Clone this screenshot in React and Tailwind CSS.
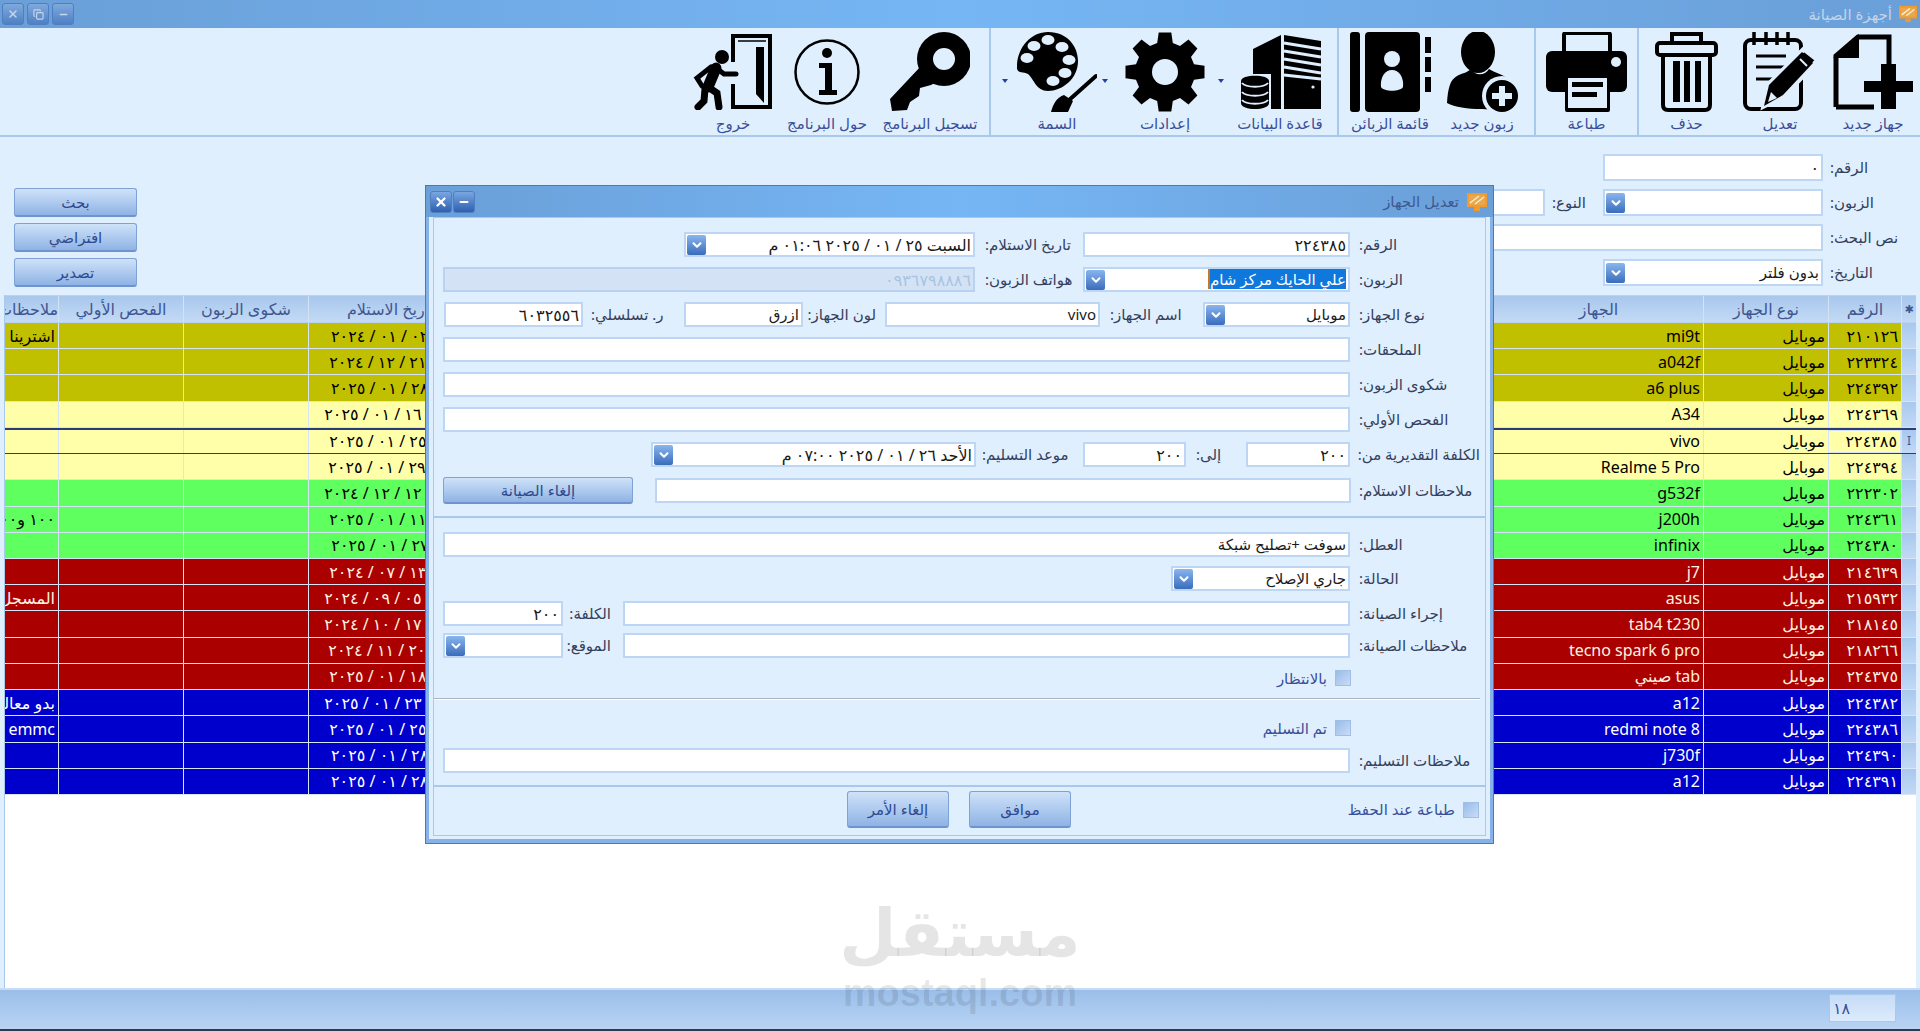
import React from 'react';
import { ChevronDown, X, Minus, Copy } from 'lucide-react';

const BG = '#e0effe';

// ---------- toolbar icons ----------
function NewDeviceIcon() {
  return (
    <svg width="81" height="76" viewBox="0 0 81 76">
      <path d="M3 73V22L25 3H56V30M3 73H41" fill="none" stroke="#000" strokeWidth="5" />
      <path d="M0 24L26 0V24Z" />
      <path d="M48 30H63V47H80V58H63V75H48V58H31V47H48Z" />
    </svg>
  );
}
function EditIcon() {
  return (
    <svg width="77" height="80" viewBox="0 0 77 80">
      <rect x="3" y="8" width="56" height="69" rx="6" fill="none" stroke="#000" strokeWidth="4" />
      <path d="M12 0V13M24 0V13M35 0V13M46 0V13" stroke="#000" strokeWidth="3.5" />
      <path d="M14 24H44M14 35H44M14 47H34" stroke="#000" strokeWidth="3" />
      <path d="M22 74L27 52L62 17L76 28L42 64Z" stroke={BG} strokeWidth="5" />
      <path d="M22 74L27 53L60 20L71 31L41 63Z" />
      <path d="M26 70L29 60L35 66Z" fill={BG} />
      <path d="M58 27L65 34" stroke={BG} strokeWidth="2" />
    </svg>
  );
}
function TrashIcon() {
  return (
    <svg width="63" height="80" viewBox="0 0 63 80">
      <path d="M17 11V2H46V11" fill="none" stroke="#000" strokeWidth="4" />
      <rect x="2" y="11" width="59" height="12" rx="3" fill="none" stroke="#000" strokeWidth="4" />
      <path d="M8 24V73Q8 78 13 78H50Q55 78 55 73V24" fill="none" stroke="#000" strokeWidth="4" />
      <rect x="18" y="29" width="7" height="41" />
      <rect x="29" y="29" width="6" height="41" />
      <rect x="40" y="29" width="6" height="41" />
    </svg>
  );
}
function PrinterIcon() {
  return (
    <svg width="81" height="80" viewBox="0 0 81 80">
      <path d="M18 19V3Q18 1 20 1H62Q64 1 64 3V19" fill="none" stroke="#000" strokeWidth="4" />
      <rect x="0" y="19" width="81" height="41" rx="6" />
      <circle cx="70" cy="30" r="5" fill={BG} />
      <rect x="19" y="43" width="45" height="37" rx="2" />
      <rect x="22" y="46" width="39" height="30" fill={BG} />
      <rect x="26" y="50" width="31" height="5" />
      <rect x="26" y="60" width="25" height="5" />
    </svg>
  );
}
function UserAddIcon() {
  return (
    <svg width="71" height="80" viewBox="0 0 71 80">
      <ellipse cx="31" cy="20" rx="17" ry="21" />
      <path d="M0 71C1 56 3 48 10 44C15 41 20 41 24 37C28 44 38 44 42 37C48 41 55 42 60 46L70 60L50 78L35 77C20 77 8 75 0 71Z" />
      <circle cx="55" cy="64" r="20" fill={BG} />
      <circle cx="55" cy="64" r="16" />
      <path d="M52 54H58V61H65V67H58V74H52V67H45V61H52Z" fill={BG} />
    </svg>
  );
}
function AddressBookIcon() {
  return (
    <svg width="81" height="80" viewBox="0 0 81 80">
      <rect x="0" y="0" width="10" height="80" rx="3" />
      <rect x="15" y="0" width="55" height="80" rx="4" />
      <rect x="75" y="5" width="6" height="16" />
      <rect x="75" y="25" width="6" height="15" />
      <rect x="75" y="45" width="6" height="15" />
      <circle cx="42" cy="27" r="8" fill={BG} />
      <path d="M31 55C30 45 35 38 42 38C49 38 54 45 53 55C50 60 34 60 31 55Z" fill={BG} />
    </svg>
  );
}
function DatabaseIcon() {
  return (
    <svg width="81" height="76" viewBox="0 0 81 76">
      <path d="M13 15L41 1V75H13Z" />
      <path d="M44 1L81 7V75H44Z" />
      <path d="M44 9L81 15M44 17L81 23M44 25L81 31M44 33L81 39M44 41L81 45" stroke={BG} strokeWidth="3" />
      <circle cx="73" cy="53" r="1.6" fill={BG} />
      <rect x="0" y="40" width="31" height="36" fill={BG} />
      <path d="M1 47C1 40 29 40 29 47V69C29 77 1 77 1 69Z" />
      <path d="M2 49C6 54 24 54 28 49M2 58C6 63 24 63 28 58M2 66C6 71 24 71 28 66" fill="none" stroke={BG} strokeWidth="2" />
    </svg>
  );
}
// 8 toothed gear, built from the angle of each tooth
function gearPath(c, r1, r2) {
  let d = '';
  for (let k = 0; k < 8; k++) {
    const a = k * 45 - 90;
    [[a - 15, r2], [a - 9, r1], [a + 9, r1], [a + 15, r2]].forEach(([t, r], i) => {
      const x = (c + r * Math.cos((t * Math.PI) / 180)).toFixed(1);
      const y = (c + r * Math.sin((t * Math.PI) / 180)).toFixed(1);
      d += (k === 0 && i === 0 ? 'M' : 'L') + x + ' ' + y;
    });
  }
  return d + 'Z';
}
function GearIcon() {
  return (
    <svg width="80" height="80" viewBox="0 0 80 80">
      <path d={gearPath(40, 40, 30)} />
      <circle cx="40" cy="40" r="13" fill={BG} />
    </svg>
  );
}
function PaletteIcon() {
  return (
    <svg width="80" height="80" viewBox="327 5 80 80">
      <path d="M358 5C378 5 388 20 388 34C388 52 372 64 358 64C346 64 344 52 338 47C333 44 329 47 327 42C326 22 340 5 358 5Z" />
      {[[337, 31], [344, 19], [358, 13], [372, 20], [379, 33], [375, 46], [363, 54]].map(([x, y]) => (
        <ellipse key={x} cx={x} cy={y} rx="6.5" ry="5" fill={BG} />
      ))}
      <path d="M406 49L378 74" stroke="#000" strokeWidth="4" strokeLinecap="round" />
      <path d="M361 85C363 77 367 70 374 68L383 74L378 85Z" />
    </svg>
  );
}
function KeyIcon() {
  return (
    <svg width="80" height="80" viewBox="200 5 80 80">
      <circle cx="254" cy="32" r="27" />
      <circle cx="254" cy="32" r="11" fill={BG} />
      <path d="M232 38L200 72L202 84L217 83L220 75L229 69L230 61L241 58L252 52Z" />
    </svg>
  );
}
function InfoIcon() {
  return (
    <svg width="66" height="66" viewBox="0 0 66 66">
      <circle cx="33" cy="33" r="31.5" fill="none" stroke="#000" strokeWidth="2.5" />
      <circle cx="33" cy="14" r="5" />
      <path d="M25 24H38V51H43V56H25V51H31V29H25Z" />
    </svg>
  );
}
function ExitIcon() {
  return (
    <svg width="80" height="76" viewBox="4 5 80 76">
      <path d="M44 33V7H81V78H44V55" fill="none" stroke="#000" strokeWidth="4" />
      <path d="M49 12H77" stroke="#000" strokeWidth="1.5" />
      <path d="M67 18H75V74L67 65Z" />
      <circle cx="33" cy="28" r="7" />
      <path d="M27 39L19 58" stroke="#000" strokeWidth="11" strokeLinecap="round" />
      <path d="M26 38L35 45H47" fill="none" stroke="#000" strokeWidth="5" strokeLinecap="round" />
      <path d="M22 38L8 49L13 57" fill="none" stroke="#000" strokeWidth="5" strokeLinecap="round" />
      <path d="M19 58L28 64L30 78" fill="none" stroke="#000" strokeWidth="7" strokeLinecap="round" />
      <path d="M16 60L15 72L9 78" fill="none" stroke="#000" strokeWidth="7" strokeLinecap="round" />
    </svg>
  );
}
function TitleIcon({ size = 20 }) {
  return (
    <svg width={size} height={size} viewBox="0 0 20 20">
      <rect x="0" y="1" width="20" height="14" fill="#f29a2e" />
      <rect x="2" y="3" width="16" height="10" fill="#e8a94e" />
      <path d="M3 11L12 4M8 12L17 5" stroke="#fdeccc" strokeWidth="1.5" />
      <rect x="7" y="15" width="6" height="4" fill="#f29a2e" />
    </svg>
  );
}

function ToolButton({ icon, label, w, arrow }) {
  return (
    <div className={`relative flex flex-col items-center shrink-0 ${w}`}>
      <div className="h-[84px] flex items-center justify-center mt-[2px]">{icon}</div>
      <span className="mt-0 text-[15px] leading-[18px] text-[#3a4f9a] whitespace-nowrap">{label}</span>
      {arrow && <span className="absolute left-[-5px] top-[51px] w-0 h-0 border-x-[3px] border-x-transparent border-t-[4px] border-t-[#27409a]" />}
    </div>
  );
}

function Sep() {
  return <div className="w-[2px] h-full bg-[#a9c9ec] shrink-0" />;
}

// ---------- small controls ----------
function WinButton({ children, dim }) {
  return (
    <div className={`w-[22px] h-[22px] rounded-[3px] border border-[#4f7fc0] flex items-center justify-center bg-linear-to-b ${dim ? 'from-[#7fa9dc] to-[#4f80c6] text-[#c5d6ea]' : 'from-[#7aa6e2] to-[#2f5fb0] text-white'}`}>
      {children}
    </div>
  );
}

function ComboArrow() {
  return (
    <span className="w-[19px] h-[20px] shrink-0 rounded-[2px] bg-linear-to-b from-[#8ab6ee] to-[#3a6cba] flex items-center justify-center">
      <ChevronDown size={14} strokeWidth={3.5} className="text-white" />
    </span>
  );
}

function Field({ w, h = 'h-[25px]', combo, disabled, num, children }) {
  return (
    <div className={`${w} ${h} shrink-0 border-2 flex items-center justify-between pr-[2px] pl-[1px] overflow-hidden whitespace-nowrap ${num ? 'text-[16px]' : 'text-[15px]'} ${disabled ? 'bg-[#d3e3f5] border-[#b9d2f0] text-[#a9c3e2]' : 'bg-white border-[#bdd6f3] text-[#1a1a1a]'}`}>
      <span>{children}</span>
      {combo && <ComboArrow />}
    </div>
  );
}

function Lbl({ w, children }) {
  return <span className={`${w} shrink-0 text-left text-[15px] text-[#34405c] whitespace-nowrap`}>{children}</span>;
}

function Check({ label }) {
  return (
    <div className="flex items-center gap-[8px]">
      <span className="w-[16px] h-[16px] shrink-0 border border-[#9fbfe8] bg-linear-to-br from-[#9abce8] to-[#c8dcf6]" />
      <span className="text-[15px] text-[#3a4f9a] whitespace-nowrap">{label}</span>
    </div>
  );
}

function Btn({ w, h, children }) {
  return (
    <button className={`${w} ${h} shrink-0 rounded-[3px] border border-[#7ea2d6] border-b-2 border-b-[#6d94cf] bg-linear-to-b from-[#cfe2f8] to-[#8fb3e5] text-[15px] text-[#2f4a8e] flex items-center justify-center`}>
      {children}
    </button>
  );
}

// ---------- grid ----------
const TONES = {
  olive: 'bg-[#c0bf00] text-black',
  pale: 'bg-[#ffffaa] text-black',
  green: 'bg-[#5fff5f] text-black',
  red: 'bg-[#aa0000] text-[#fff3e0]',
  blue: 'bg-[#0000cc] text-white',
};

const ROWS = [
  { tone: 'olive', id: '٢١٠١٢٦', name: 'mi9t', date: 'الثلاثاء ٠٢ / ٠١ / ٢٠٢٤', note: 'اشترينا الجهاز منه' },
  { tone: 'olive', id: '٢٢٣٣٢٤', name: 'a042f', date: 'السبت ٢١ / ١٢ / ٢٠٢٤' },
  { tone: 'olive', id: '٢٢٤٣٩٢', name: 'a6 plus', date: 'الثلاثاء ٢٨ / ٠١ / ٢٠٢٥' },
  { tone: 'pale', id: '٢٢٤٣٦٩', name: 'A34', date: 'الخميس ١٦ / ٠١ / ٢٠٢٥' },
  { tone: 'pale', id: '٢٢٤٣٨٥', name: 'vivo', date: 'السبت ٢٥ / ٠١ / ٢٠٢٥', selected: true },
  { tone: 'pale', id: '٢٢٤٣٩٤', name: 'Realme 5 Pro', date: 'الأربعاء ٢٩ / ٠١ / ٢٠٢٥' },
  { tone: 'green', id: '٢٢٢٣٠٢', name: 'g532f', date: 'الخميس ١٢ / ١٢ / ٢٠٢٤' },
  { tone: 'green', id: '٢٢٤٣٦١', name: 'j200h', date: 'السبت ١١ / ٠١ / ٢٠٢٥', note: '١٠٠ و١٠٠ دولار' },
  { tone: 'green', id: '٢٢٤٣٨٠', name: 'infinix', date: 'الاثنين ٢٧ / ٠١ / ٢٠٢٥' },
  { tone: 'red', id: '٢١٤٦٣٩', name: 'j7', date: 'السبت ١٣ / ٠٧ / ٢٠٢٤' },
  { tone: 'red', id: '٢١٥٩٣٢', name: 'asus', date: 'الخميس ٠٥ / ٠٩ / ٢٠٢٤', note: 'المسجل عليه' },
  { tone: 'red', id: '٢١٨١٤٥', name: 'tab4 t230', date: 'الخميس ١٧ / ١٠ / ٢٠٢٤' },
  { tone: 'red', id: '٢١٨٢٦٦', name: 'tecno spark 6 pro', date: 'الأربعاء ٢٠ / ١١ / ٢٠٢٤' },
  { tone: 'red', id: '٢٢٤٣٧٥', name: 'tab صيني', date: 'السبت ١٨ / ٠١ / ٢٠٢٥' },
  { tone: 'blue', id: '٢٢٤٣٨٢', name: 'a12', date: 'الخميس ٢٣ / ٠١ / ٢٠٢٥', note: 'بدو معالجة جديدة' },
  { tone: 'blue', id: '٢٢٤٣٨٦', name: 'redmi note 8', date: 'السبت ٢٥ / ٠١ / ٢٠٢٥', note: 'emmc' },
  { tone: 'blue', id: '٢٢٤٣٩٠', name: 'j730f', date: 'الثلاثاء ٢٨ / ٠١ / ٢٠٢٥' },
  { tone: 'blue', id: '٢٢٤٣٩١', name: 'a12', date: 'الثلاثاء ٢٨ / ٠١ / ٢٠٢٥' },
];

const HEAD_CELL = 'h-full shrink-0 border-l border-[#d3e3f6] flex items-center justify-center overflow-hidden whitespace-nowrap';
const CELL = 'h-full shrink-0 border-l border-[#d5e4f6] flex items-center overflow-hidden whitespace-nowrap pr-[3px]';

function GridHeader() {
  return (
    <div className="h-[28px] flex text-[16px] text-[#3f5690] bg-linear-to-b from-[#a7c7ed] to-[#c4daf5] border-y border-[#b8d2f0]">
      <div className={`${HEAD_CELL} w-[15px] text-[11px]`}>✱</div>
      <div className={`${HEAD_CELL} w-[73px]`}>الرقم</div>
      <div className={`${HEAD_CELL} w-[125px]`}>نوع الجهاز</div>
      <div className={`${HEAD_CELL} w-[210px]`}>الجهاز</div>
      <div className="flex-1" />
      <div className={`${HEAD_CELL} w-[190px] pr-[26px]`}>تاريخ الاستلام</div>
      <div className={`${HEAD_CELL} w-[125px]`}>شكوى الزبون</div>
      <div className={`${HEAD_CELL} w-[125px]`}>الفحص الأولي</div>
      <div className={`${HEAD_CELL} w-[53px] justify-start border-l-0`}>ملاحظات</div>
    </div>
  );
}

function GridRow({ row }) {
  return (
    <div className={`h-[26.22px] flex text-[16px] border-b border-[#d5e4f6] ${TONES[row.tone]} ${row.selected ? 'border-y-2 border-y-[#2b3c78]' : ''}`}>
      <div className="w-[15px] h-full shrink-0 border-l border-[#d5e4f6] bg-linear-to-b from-[#a9c8ee] to-[#c2d9f5] flex items-center justify-center text-[12px] text-[#3f5690]">
        {row.selected ? 'I' : ''}
      </div>
      <div className={`${CELL} w-[73px] ${row.selected ? 'border border-[#2b3c78]' : ''}`}>{row.id}</div>
      <div className={`${CELL} w-[125px]`}>موبايل</div>
      <div className={`${CELL} w-[210px]`}>{row.name}</div>
      <div className="flex-1" />
      <div className={`${CELL} w-[190px] justify-center pr-0`}>{row.date}</div>
      <div className={`${CELL} w-[125px]`} />
      <div className={`${CELL} w-[125px]`} />
      <div className={`${CELL} w-[53px] border-l-0`}>{row.note}</div>
    </div>
  );
}

// ---------- edit dialog ----------
function Dialog() {
  return (
    <div className="absolute left-[425px] top-[185px] w-[1069px] h-[659px] border border-[#4a78b8] flex flex-col">
      <div className="h-[31px] shrink-0 bg-linear-to-r from-[#6a9fd8] via-[#76b6f5] to-[#6a9fd8] flex items-center justify-between pr-[6px] pl-[4px]">
        <div className="flex items-center gap-[8px]">
          <TitleIcon />
          <span className="text-[15px] text-[#3f5a90]">تعديل الجهاز</span>
        </div>
        <div className="flex flex-row-reverse gap-[1px]">
          <WinButton><X size={14} strokeWidth={4} /></WinButton>
          <WinButton><Minus size={12} strokeWidth={4} /></WinButton>
        </div>
      </div>
      <div className="flex-1 flex flex-col bg-[#86b2e9] px-[3px] pb-[4px]">
        <div className="flex-1 flex flex-col bg-[#e0effe] px-[4px] pb-[3px]">
          <div className="flex-1 border border-[#a9c9ec] flex flex-col">
            {/* receive section */}
            <div className="pt-[14px] pb-[12px] pr-[5px] pl-[9px] border-b-2 border-[#a9c9ec] flex flex-col gap-[10px]">
              <div className="flex items-center gap-[9px]">
                <Lbl w="w-[121px]">الرقم:</Lbl>
                <Field w="w-[267px]" num>٢٢٤٣٨٥</Field>
                <Lbl w="w-[89px]">تاريخ الاستلام:</Lbl>
                <Field w="w-[291px] ml-0 mr-[1px]" combo num>السبت ٢٥ / ٠١ / ٢٠٢٥ ٠١:٠٦ م</Field>
              </div>
              <div className="flex items-center gap-[9px]">
                <Lbl w="w-[121px]">الزبون:</Lbl>
                <Field w="w-[267px]" combo>
                  <span className="bg-[#0f78dc] text-white border-l-2 border-[#c9762a]">علي الحايك مركز شام</span>
                </Field>
                <Lbl w="w-[89px]">هواتف الزبون:</Lbl>
                <Field w="w-[532px] mr-[1px]" disabled num>٠٩٣٦٧٩٨٨٨٦</Field>
              </div>
              <div className="flex items-center">
                <Lbl w="w-[121px]">نوع الجهاز:</Lbl>
                <div className="w-[9px]" />
                <Field w="w-[147px]" combo>موبايل</Field>
                <div className="w-[20px]" />
                <Lbl w="w-[73px]">اسم الجهاز:</Lbl>
                <div className="w-[10px]" />
                <Field w="w-[215px]">vivo</Field>
                <div className="w-[9px]" />
                <Lbl w="w-[65px]">لون الجهاز:</Lbl>
                <div className="w-[8px]" />
                <Field w="w-[119px]">ازرق</Field>
                <div className="w-[13px]" />
                <Lbl w="w-[80px]">ر. تسلسلي:</Lbl>
                <div className="w-[8px]" />
                <Field w="w-[139px]" num>٦٠٣٢٥٥٦</Field>
              </div>
              <div className="flex items-center gap-[9px]">
                <Lbl w="w-[121px]">الملحقات:</Lbl>
                <Field w="w-[907px]" />
              </div>
              <div className="flex items-center gap-[9px]">
                <Lbl w="w-[121px]">شكوى الزبون:</Lbl>
                <Field w="w-[907px]" />
              </div>
              <div className="flex items-center gap-[9px]">
                <Lbl w="w-[121px]">الفحص الأولي:</Lbl>
                <Field w="w-[907px]" />
              </div>
              <div className="flex items-center">
                <Lbl w="w-[121px]">الكلفة التقديرية من:</Lbl>
                <div className="w-[9px]" />
                <Field w="w-[104px]" num>٢٠٠</Field>
                <div className="w-[24px]" />
                <Lbl w="w-[26px]">إلى:</Lbl>
                <div className="w-[10px]" />
                <Field w="w-[103px]" num>٢٠٠</Field>
                <div className="w-[12px]" />
                <Lbl w="w-[89px]">موعد التسليم:</Lbl>
                <div className="w-[6px]" />
                <Field w="w-[325px]" combo num>الأحد ٢٦ / ٠١ / ٢٠٢٥ ٠٧:٠٠ م</Field>
              </div>
              <div className="flex items-center">
                <Lbl w="w-[121px]">ملاحظات الاستلام:</Lbl>
                <div className="w-[9px]" />
                <Field w="w-[696px]" />
                <div className="w-[23px]" />
                <Btn w="w-[190px]" h="h-[27px]">إلغاء الصيانة</Btn>
              </div>
            </div>

            {/* repair section */}
            <div className="pr-[5px] pl-[9px] pt-[14px] flex flex-col">
              <div className="flex items-center gap-[9px]">
                <Lbl w="w-[121px]">العطل:</Lbl>
                <Field w="w-[907px]">سوفت +تصليح شبكة</Field>
              </div>
              <div className="flex items-center gap-[9px] mt-[9px]">
                <Lbl w="w-[121px]">الحالة:</Lbl>
                <Field w="w-[179px]" combo>جاري الإصلاح</Field>
              </div>
              <div className="flex items-center mt-[10px]">
                <Lbl w="w-[121px]">إجراء الصيانة:</Lbl>
                <div className="w-[9px]" />
                <Field w="w-[727px]" />
                <div className="w-[12px]" />
                <Lbl w="w-[40px]">الكلفة:</Lbl>
                <div className="w-[8px]" />
                <Field w="w-[120px]" num>٢٠٠</Field>
              </div>
              <div className="flex items-center mt-[7px]">
                <Lbl w="w-[121px]">ملاحظات الصيانة:</Lbl>
                <div className="w-[9px]" />
                <Field w="w-[727px]" />
                <div className="w-[12px]" />
                <Lbl w="w-[40px]">الموقع:</Lbl>
                <div className="w-[8px]" />
                <Field w="w-[120px]" combo />
              </div>
              <div className="mt-[12px] pr-[129px] h-[16px] flex">
                <Check label="بالانتظار" />
              </div>
            </div>
            <div className="mt-[12px] mr-[5px] h-[2px] border-t border-[#aeb4bb] bg-white" />

            {/* delivery section */}
            <div className="pr-[5px] pl-[9px] pt-[20px] pb-[12px] border-b-2 border-[#a9c9ec] flex flex-col">
              <div className="pr-[129px] h-[16px] flex">
                <Check label="تم التسليم" />
              </div>
              <div className="flex items-center gap-[9px] mt-[12px]">
                <Lbl w="w-[121px]">ملاحظات التسليم:</Lbl>
                <Field w="w-[907px]" />
              </div>
            </div>

            <div className="flex items-center pr-[6px] mt-[4px]">
              <div className="w-[408px] shrink-0 flex">
                <Check label="طباعة عند الحفظ" />
              </div>
              <Btn w="w-[102px]" h="h-[37px]">موافق</Btn>
              <div className="w-[20px]" />
              <Btn w="w-[102px]" h="h-[37px]">إلغاء الأمر</Btn>
            </div>
          </div>
        </div>
      </div>
    </div>
  );
}

export default function App() {
  return (
    <div dir="rtl" className="relative w-[1920px] h-[1031px] overflow-hidden flex flex-col bg-[#e0effe] font-['Noto_Sans','DejaVu_Sans',sans-serif]">
      {/* title bar */}
      <div className="h-[28px] shrink-0 bg-linear-to-r from-[#6a9fd8] via-[#76b6f5] to-[#6a9fd8] flex items-center justify-between pr-[3px] pl-[2px]">
        <div className="flex items-center gap-[7px]">
          <TitleIcon size={18} />
          <span className="text-[15px] text-[#c3d4e8]">أجهزة الصيانة</span>
        </div>
        <div className="flex flex-row-reverse gap-[3px]">
          <WinButton dim><X size={12} strokeWidth={3} /></WinButton>
          <WinButton dim><Copy size={11} strokeWidth={2.5} /></WinButton>
          <WinButton dim><Minus size={11} strokeWidth={3} /></WinButton>
        </div>
      </div>

      {/* toolbar */}
      <div className="h-[109px] shrink-0 border-b-2 border-[#a9c9ec] flex items-stretch">
        <ToolButton w="w-[94px]" icon={<NewDeviceIcon />} label="جهاز جديد" />
        <ToolButton w="w-[92px]" icon={<EditIcon />} label="تعديل" />
        <ToolButton w="w-[95px]" icon={<TrashIcon />} label="حذف" />
        <Sep />
        <ToolButton w="w-[101px]" icon={<PrinterIcon />} label="طباعة" />
        <Sep />
        <ToolButton w="w-[104px]" icon={<UserAddIcon />} label="زبون جديد" />
        <ToolButton w="w-[80px]" icon={<AddressBookIcon />} label="قائمة الزبائن" />
        <div className="w-[11px] shrink-0" />
        <Sep />
        <ToolButton w="w-[114px]" icon={<DatabaseIcon />} label="قاعدة البيانات" arrow />
        <ToolButton w="w-[116px]" icon={<GearIcon />} label="إعدادات" arrow />
        <ToolButton w="w-[100px]" icon={<PaletteIcon />} label="السمة" arrow />
        <div className="w-[16px] shrink-0" />
        <Sep />
        <ToolButton w="w-[118px]" icon={<KeyIcon />} label="تسجيل البرنامج" />
        <ToolButton w="w-[88px]" icon={<InfoIcon />} label="حول البرنامج" />
        <ToolButton w="w-[100px]" icon={<ExitIcon />} label="خروج" />
      </div>

      {/* filters */}
      <div className="h-[158px] shrink-0 flex justify-between">
        <div className="pt-[17px] flex flex-col gap-[8px]">
          <div className="flex items-center">
            <Lbl w="w-[90px] pl-[0px]">الرقم:</Lbl>
            <div className="w-[7px]" />
            <Field w="w-[220px]" h="h-[27px]" num>٠</Field>
          </div>
          <div className="flex items-center">
            <Lbl w="w-[90px]">الزبون:</Lbl>
            <div className="w-[7px]" />
            <Field w="w-[220px]" h="h-[27px]" combo />
            <div className="w-[12px]" />
            <Lbl w="w-[39px]">النوع:</Lbl>
            <div className="w-[7px]" />
            <Field w="w-[200px]" h="h-[27px]" />
          </div>
          <div className="flex items-center">
            <Lbl w="w-[90px]">نص البحث:</Lbl>
            <div className="w-[7px]" />
            <Field w="w-[500px]" h="h-[27px]" />
          </div>
          <div className="flex items-center">
            <Lbl w="w-[90px]">التاريخ:</Lbl>
            <div className="w-[7px]" />
            <Field w="w-[220px]" h="h-[27px]" combo>بدون فلتر</Field>
          </div>
        </div>
        <div className="pl-[14px] pt-[51px] flex flex-col gap-[6px]">
          <Btn w="w-[123px]" h="h-[29px]">بحث</Btn>
          <Btn w="w-[123px]" h="h-[29px]">افتراضي</Btn>
          <Btn w="w-[123px]" h="h-[29px]">تصدير</Btn>
        </div>
      </div>

      {/* device list */}
      <div className="flex-1 mr-[4px] ml-[4px] bg-white border-l border-[#a9c9ec] flex flex-col overflow-hidden">
        <GridHeader />
        {ROWS.map((r) => <GridRow key={r.id + r.name} row={r} />)}
      </div>

      {/* status bar */}
      <div className="h-[43px] shrink-0 border-t-2 border-[#c6dbf4] flex flex-col">
        <div className="flex-1 bg-linear-to-b from-[#9abee9] to-[#b9d4f4] pr-[24px] pt-[4px]">
          <div className="w-[67px] h-[28px] border border-[#a9c9ec] bg-linear-to-b from-[#c6dcf6] to-[#dcebfc] text-[16px] text-[#3a4f9a] flex items-center justify-end pl-[3px]">
            <span>١٨</span>
          </div>
        </div>
        <div className="h-[2px] bg-[#2c3b4f]" />
      </div>

      <Dialog />

      {/* watermark */}
      <div className="absolute left-[844px] top-[890px] w-[232px] flex flex-col items-center pointer-events-none text-black/10">
        <span className="text-[66px] leading-[88px] h-[88px] font-bold font-['DejaVu_Sans'] whitespace-nowrap">مستقل</span>
        <span dir="ltr" className="mt-[2px] text-[38px] leading-[26px] h-[26px] font-bold font-['Liberation_Sans'] whitespace-nowrap">mostaql.com</span>
      </div>
    </div>
  );
}
